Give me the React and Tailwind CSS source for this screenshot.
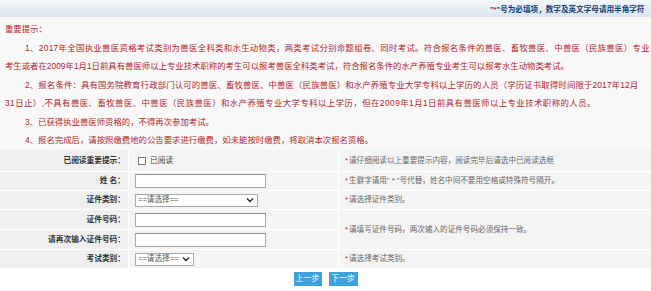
import React from 'react'

// 每行按原图换行，字距微调以对齐原图行宽
const notice = [
  { indent: true,  t: 'tracking-[0.32px]', text: '1、2017年全国执业兽医资格考试类别为兽医全科类和水生动物类，两类考试分别命题组卷、同时考试。符合报名条件的兽医、畜牧兽医、中兽医（民族兽医）专业' },
  { indent: false, t: 'tracking-[0px]',    text: '考生或者在2009年1月1日前具有兽医师以上专业技术职称的考生可以报考兽医全科类考试，符合报名条件的水产养殖专业考生可以报考水生动物类考试。' },
  { indent: true,  t: 'tracking-[0.15px]', text: '2、报名条件：具有国务院教育行政部门认可的兽医、畜牧兽医、中兽医（民族兽医）和水产养殖专业大学专科以上学历的人员（学历证书取得时间限于2017年12月' },
  { indent: false, t: 'tracking-[0.45px]', text: '31日止）,不具有兽医、畜牧兽医、中兽医（民族兽医）和水产养殖专业大学专科以上学历，但在2009年1月1日前具有兽医师以上专业技术职称的人员。' },
  { indent: true,  t: 'tracking-[0px]',    text: '3、已获得执业兽医师资格的，不得再次参加考试。' },
  { indent: true,  t: 'tracking-[0px]',    text: '4、报名完成后，请按照缴费地的公告要求进行缴费，如未能按时缴费，将取消本次报名资格。' },
]

function Label({ children }) {
  return (
    <div className="bg-[#efefef] flex items-center justify-end pr-[3px] text-[7.7px] font-bold text-[#333] whitespace-nowrap">
      {children}
    </div>
  )
}

function Hint({ children, className = '' }) {
  return (
    <div className={`bg-[#f4f4f4] flex items-center pl-[6px] text-[7.6px] text-[#666] whitespace-nowrap ${className}`}>
      <span className="text-[#d22] mr-[1px]">*</span>{children}
    </div>
  )
}

function TextBox() {
  return (
    <div className="w-[131px] h-[14px] bg-white border border-[#a9a9a9] border-t-[#8a8a8a]" />
  )
}

function Select({ width }) {
  return (
    <div className={`${width} h-[13px] bg-white border border-[#a9a9a9] flex items-center justify-between pl-[2px] pr-[3px] text-[7.6px] text-[#555] whitespace-nowrap overflow-hidden`}>
      <span>==请选择==</span>
      <svg width="8" height="6" viewBox="0 0 8 6" fill="none" className="shrink-0">
        <path d="M1 1.5 L4 4.5 L7 1.5" stroke="#222" strokeWidth="1.3" />
      </svg>
    </div>
  )
}

export default function App() {
  return (
    <div className="w-[651px] h-[291px] overflow-hidden bg-white font-['Liberation_Sans','Noto_Sans_CJK_SC',sans-serif] [text-spacing-trim:space-all]">

      {/* 顶部提示条 */}
      <div className="h-[17px] bg-gradient-to-b from-[#f4f8fb] to-[#d8e5f0] flex items-center pl-[490px] whitespace-nowrap overflow-hidden">
        <span className="text-[7.6px] font-bold text-[#173c6e] pt-[3px]">
          "<span className="text-[#d22]">*</span>"号为必填项，数字及英文字母请用半角字符
        </span>
      </div>

      {/* 重要提示 */}
      <div className="bg-[#f8f8f8] h-[133px] pt-[3px] pl-[5px] text-[8.4px] leading-[18.5px] text-[#b1262c]">
        <div className="whitespace-nowrap">重要提示：</div>
        {notice.map((l, i) => (
          <div key={i} className={`whitespace-nowrap ${l.t} ${l.indent ? 'pl-[20px]' : ''}`}>{l.text}</div>
        ))}
      </div>

      {/* 表单 */}
      <div className="grid grid-cols-[128px_209px_1fr] grid-rows-[21px_18px_18px_19px_19px_18px] gap-px bg-white">
        <Label>已阅读重要提示：</Label>
        <div className="bg-[#f4f4f4] flex items-center pl-[9px] gap-[4px] text-[7.7px] text-[#444]">
          <div className="w-[8px] h-[8px] bg-white border border-[#777]" />
          <span>已阅读</span>
        </div>
        <Hint>请仔细阅读以上重要提示内容，阅读完毕后请选中已阅读选框</Hint>

        <Label>姓&nbsp;名：</Label>
        <div className="bg-[#f4f4f4] flex items-center pl-[6px]"><TextBox /></div>
        <Hint>生僻字请用" * "号代替，姓名中间不要用空格或特殊符号隔开。</Hint>

        <Label>证件类别：</Label>
        <div className="bg-[#f4f4f4] flex items-center pl-[6px]"><Select width="w-[123px]" /></div>
        <Hint>请选择证件类别。</Hint>

        <Label>证件号码：</Label>
        <div className="bg-[#f4f4f4] flex items-center pl-[6px]"><TextBox /></div>
        <Hint className="row-span-2">请填写证件号码，两次输入的证件号码必须保持一致。</Hint>

        <Label>请再次输入证件号码：</Label>
        <div className="bg-[#f4f4f4] flex items-center pl-[6px]"><TextBox /></div>

        <Label>考试类别：</Label>
        <div className="bg-[#f4f4f4] flex items-center pl-[6px]"><Select width="w-[59px]" /></div>
        <Hint>请选择考试类别。</Hint>
      </div>

      {/* 按钮 */}
      <div className="flex justify-center gap-[7px] pt-[4px]">
        <button className="w-[28px] h-[14px] bg-[#3ba2de] text-white text-[8px] leading-[14px]">上一步</button>
        <button className="w-[29px] h-[14px] bg-[#3ba2de] text-white text-[8px] leading-[14px]">下一步</button>
      </div>
    </div>
  )
}
